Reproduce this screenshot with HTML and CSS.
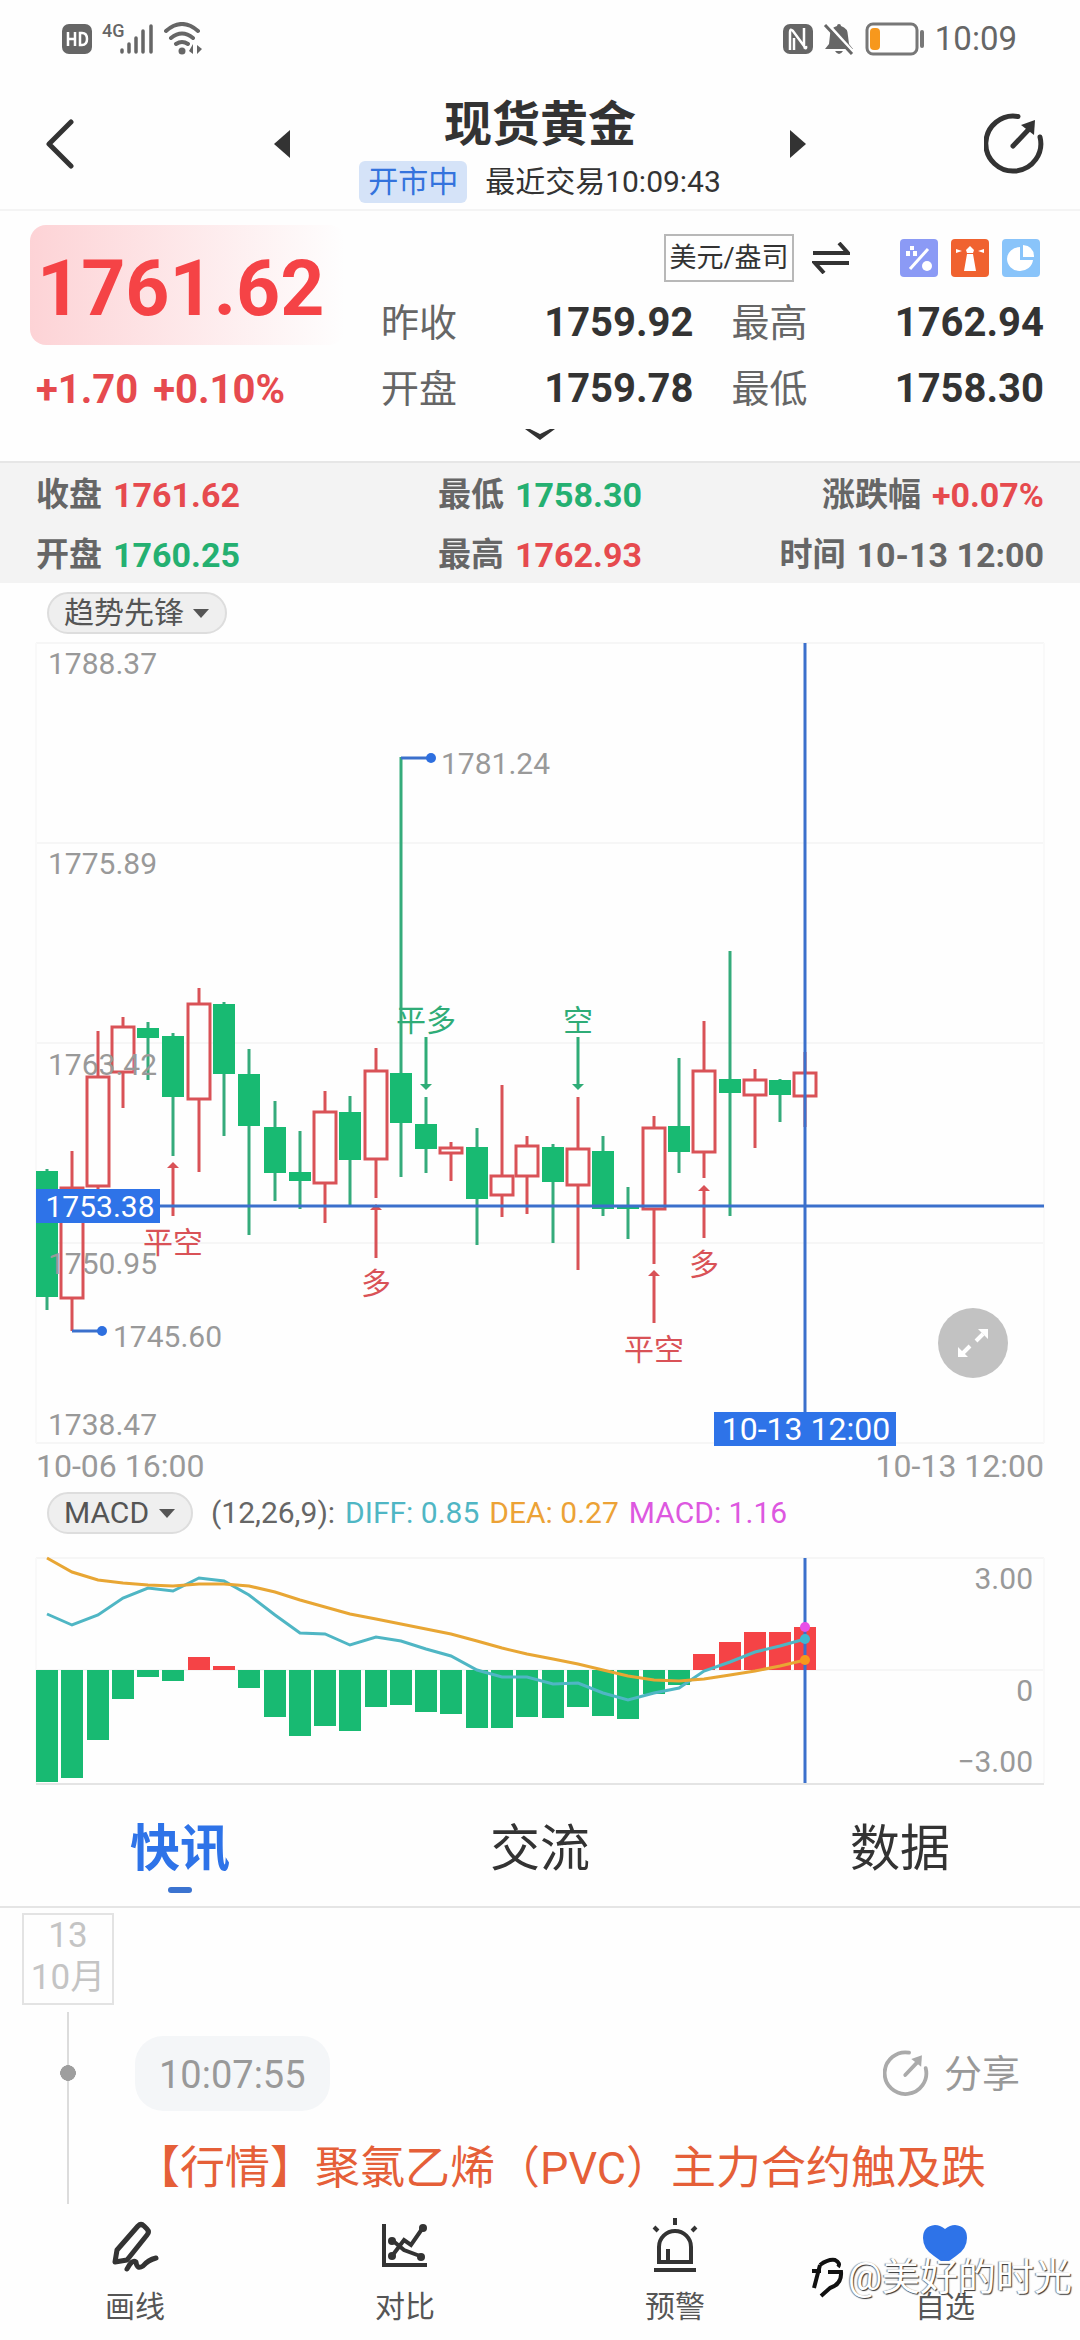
FILE: index.html
```html
<!DOCTYPE html>
<html lang="zh-CN">
<head>
<meta charset="utf-8">
<meta name="viewport" content="width=device-width, initial-scale=1">
<title>现货黄金</title>
<link rel="stylesheet" href="styles.css">
</head>
<body>
<svg class="defs" width="0" height="0" aria-hidden="true">
  <symbol id="share" viewBox="0 0 60 62">
    <path d="M34 3.500A27.500 27.500 0 1 0 56 24" fill="none" stroke="currentColor" stroke-width="5" stroke-linecap="round"/>
    <path d="M29 33 47 14" fill="none" stroke="currentColor" stroke-width="5" stroke-linecap="round"/>
    <path d="M37 12 51 7 50 22z" fill="currentColor"/>
  </symbol>
</svg>

<div class="status">
  <div class="status-side">
    <svg width="30" height="32" viewBox="0 0 30 32"><rect y="1" width="30" height="30" rx="7" fill="#666"/><path d="M6 9v14M13 9v14M6 16h7M18 10v12h2q5 0 5-6t-5-6z" fill="none" stroke="#fff" stroke-width="2.500"/></svg>
    <span class="net">4G</span>
    <svg class="bars" width="34" height="32" viewBox="0 0 34 32" stroke="#666" stroke-width="3.500" stroke-linecap="round"><path d="M2 27v2M9 21v8M16 15v14M23 8v21M31 3v26"/></svg>
    <svg width="38" height="34" viewBox="0 0 38 34" fill="none" stroke="#666" stroke-width="4" stroke-linecap="round"><path d="M2 9Q18-5 34 9M7 16Q18 7 29 16M12 22Q18 18 24 22"/><circle cx="18" cy="29" r="3.500" fill="#666" stroke="none"/><path d="M25 29l4-7v10zM38 27l-5-4v9z" fill="#666" stroke="none"/></svg>
  </div>
  <div class="status-side">
    <svg width="30" height="32" viewBox="0 0 30 32"><rect y="1" width="30" height="30" rx="7" fill="#666"/><path d="M7 27V9q0-4 3-1l11 15V5M11 27V15M23 23q1 4-2 1" fill="none" stroke="#fff" stroke-width="2.500"/></svg>
    <svg width="32" height="32" viewBox="0 0 32 32"><path d="M16 1q2 0 2 2 7 2 7 10l1 8 4 5H2l4-5 1-9q0-7 7-9 0-2 2-2z" fill="#666"/><path d="M12 28h8q-4 6-8 0z" fill="#666"/><path d="M3-1 31 30" stroke="#fff" stroke-width="3"/><path d="M2 2 29 31" stroke="#666" stroke-width="3"/></svg>
    <svg width="60" height="34" viewBox="0 0 60 34"><rect x="2" y="2" width="50" height="30" rx="6" fill="none" stroke="#777" stroke-width="3"/><rect x="5" y="6" width="10" height="22" rx="4" fill="#f7981d"/><path d="M57 10v14" stroke="#777" stroke-width="4" stroke-linecap="round"/></svg>
    <time class="clock">10:09</time>
  </div>
</div>

<header class="head">
  <button class="icon-btn" aria-label="返回"><svg width="30" height="50" viewBox="0 0 30 50"><path d="M26 3 4 25l22 22" fill="none" stroke="#333" stroke-width="5" stroke-linecap="round" stroke-linejoin="round"/></svg></button>
  <div class="stepper">
    <button class="icon-btn" aria-label="上一个"><svg width="16" height="28" viewBox="0 0 16 28"><path d="M16 0v28L0 14z" fill="#333"/></svg></button>
    <div class="head-mid">
      <h1>现货黄金</h1>
      <p class="trade"><span class="open">开市中</span>最近交易10:09:43</p>
    </div>
    <button class="icon-btn" aria-label="下一个"><svg width="16" height="28" viewBox="0 0 16 28"><path d="M0 0v28l16-14z" fill="#333"/></svg></button>
  </div>
  <button class="icon-btn" aria-label="分享"><svg width="60" height="62"><use href="#share"/></svg></button>
</header>

<section class="quote">
  <div class="now">
    <div class="price">1761.62</div>
    <div class="change"><span>+1.70</span><span>+0.10%</span></div>
  </div>
  <div class="detail">
    <div class="tools">
      <button class="unit">美元/盎司</button>
      <button class="icon-btn" aria-label="切换单位"><svg width="38" height="32" viewBox="0 0 38 32" fill="none" stroke="#333" stroke-width="4"><path d="M1 11h35L27 1M37 21H3l9 10"/></svg></button>
      <span class="apps">
        <button class="icon-btn" aria-label="计算"><svg width="38" height="38" viewBox="0 0 38 38"><rect width="38" height="38" rx="4" fill="#8b9af5"/><path d="M28 10 10 30" stroke="#fff" stroke-width="3"/><path d="M10 7h4v4h-4zM6 12h4v5H6zM13 12h4v5h-4z" fill="#fff"/><circle cx="27" cy="27" r="5" fill="#fff"/></svg></button>
        <button class="icon-btn" aria-label="灯塔"><svg width="38" height="38" viewBox="0 0 38 38"><rect width="38" height="38" rx="4" fill="#f0622f"/><path d="M16 15h6l3 17H13zM15 11l4-4 4 4-1 3h-6zM5 10l6 2-6 2zM33 10l-6 2 6 2z" fill="#fff"/></svg></button>
        <button class="icon-btn" aria-label="统计"><svg width="38" height="38" viewBox="0 0 38 38"><rect width="38" height="38" rx="4" fill="#89c4fa"/><path d="M18 8v13h13A13 12 0 1 1 18 8z" fill="#fff"/><path d="M21 6q11 1 11 12H21z" fill="#fff"/></svg></button>
      </span>
    </div>
    <dl class="stats">
      <div><dt>昨收</dt><dd>1759.92</dd></div>
      <div><dt>最高</dt><dd>1762.94</dd></div>
      <div><dt>开盘</dt><dd>1759.78</dd></div>
      <div><dt>最低</dt><dd>1758.30</dd></div>
    </dl>
  </div>
  <button class="more" aria-label="展开"><svg width="30" height="12" viewBox="0 0 30 12"><path d="M0 1h5l10 5 10-5h5L15 12z" fill="#333"/></svg></button>
</section>

<dl class="summary">
  <div><dt>收盘</dt><dd class="up">1761.62</dd></div>
  <div><dt>最低</dt><dd class="down">1758.30</dd></div>
  <div><dt>涨跌幅</dt><dd class="up">+0.07%</dd></div>
  <div><dt>开盘</dt><dd class="down">1760.25</dd></div>
  <div><dt>最高</dt><dd class="up">1762.93</dd></div>
  <div><dt>时间</dt><dd>10-13 12:00</dd></div>
</dl>

<div class="bar">
  <label class="pick"><select aria-label="主图指标"><option>趋势先锋</option></select><svg width="16" height="9" viewBox="0 0 16 9"><path d="M0 0h16L8 9z" fill="#555"/></svg></label>
</div>
<div class="chart">
  <svg id="kline" viewBox="0 634 1080 850" role="img" aria-label="K线图"></svg>
  <button class="expand" aria-label="全屏"><svg width="34" height="34" viewBox="0 0 34 34"><path d="M20 15l7-7M14 20l-7 7" stroke="#fff" stroke-width="4"/><path d="M22 3h10v10zM2 21v10h10z" fill="#fff"/></svg></button>
</div>

<div class="bar macd-bar">
  <label class="pick"><select aria-label="副图指标"><option>MACD</option></select><svg width="16" height="9" viewBox="0 0 16 9"><path d="M0 0h16L8 9z" fill="#555"/></svg></label>
  <p class="legend"><span>(12,26,9):</span><span class="diff">DIFF: 0.85</span><span class="dea">DEA: 0.27</span><span class="macd">MACD: 1.16</span></p>
</div>
<div class="chart">
  <svg id="macd" viewBox="0 1534 1080 252" role="img" aria-label="MACD"></svg>
</div>

<nav class="tabs">
  <a href="#news" class="on">快讯</a>
  <a href="#talk">交流</a>
  <a href="#data">数据</a>
</nav>

<main class="news" id="news">
  <div class="rail">
    <div class="day"><span>13</span><span>10月</span></div>
    <div class="line"></div>
  </div>
  <article class="item">
    <div class="meta">
      <time class="time">10:07:55</time>
      <button class="share"><svg width="46" height="47"><use href="#share"/></svg>分享</button>
    </div>
    <h2>【行情】聚氯乙烯（PVC）主力合约触及跌</h2>
  </article>
</main>

<nav class="dock">
  <button><svg width="56" height="56" viewBox="0 0 56 56" fill="none" stroke="#333" stroke-width="5" stroke-linejoin="round" stroke-linecap="round"><path d="M8 44l2-12L31 8q3-3 6 0l3 3q3 3 0 6L20 42zM20 51q5-10 9-7 1 8 7 4 5-6 13-8"/></svg>画线</button>
  <button><svg width="56" height="56" viewBox="0 0 56 56" fill="none" stroke="#333" stroke-width="4"><path d="M7 6v41h43"/><path d="M15 38 27 22 34 27 45 11M15 22l12 10 16 6"/><g fill="#333" stroke="none"><circle cx="46" cy="10" r="4"/><circle cx="15" cy="23" r="4"/><circle cx="15" cy="38" r="4"/><circle cx="44" cy="39" r="4"/></g></svg>对比</button>
  <button><svg width="56" height="56" viewBox="0 0 56 56" fill="none" stroke="#333" stroke-width="4"><path d="M12 44V29a16 16 0 0 1 32 0v15zM21 43V31M7 52h42M28 0v7M7 9l4 4M49 9l-4 4"/></svg>预警</button>
  <button><svg width="56" height="56" viewBox="0 0 56 56"><path d="M28 11Q33 7 38 7q12 1 12 13 0 11-11 18L28 46 17 38Q6 31 6 20 6 8 18 7q5 0 10 4z" fill="#2e73e8"/></svg>自选</button>
  <div class="mark"><svg width="34" height="42" viewBox="0 0 34 42" fill="none" stroke="#111" stroke-width="4"><path d="M2 15h9M10 9 4 32M10 9q8-6 15-5 6 3 3 7M18 16h13q1 12-11 16L11 40"/></svg>@美好的时光</div>
</nav>
<script src="chart.js"></script>
</body>
</html>
```

FILE: styles.css
```css
* { box-sizing: border-box; }
body, h1, h2, p, dl, dd { margin: 0; }
body {
  display: flex;
  flex-direction: column;
  min-height: 100vh;
  background: #fefefe;
  color: #333;
  font-family: Roboto, "Noto Sans CJK SC", sans-serif;
  font-size: 30px;
}
button, select { font: inherit; color: inherit; background: none; border: 0; padding: 0; }
svg { display: block; flex: none; }
.defs { position: absolute; }
a { color: inherit; text-decoration: none; }

.status {
  display: flex;
  justify-content: space-between;
  height: 78px;
  padding: 0 63px 0 62px;
  align-items: center;
  color: #666;
}
.status-side { display: flex; align-items: center; gap: 10px; }
.net { align-self: flex-start; width: 18px; font-size: 18px; line-height: 18px; font-weight: 500; margin-right: -10px; }
.clock { font-size: 33px; line-height: 40px; }

.head {
  display: grid;
  grid-template-columns: 1fr 532px 1fr;
  align-items: center;
  height: 133px;
  padding: 0 36px 0 36px;
  border-bottom: 2px solid #f4f4f4;
}
.head > .icon-btn:first-child { padding-left: 9px; }
.head > .icon-btn:last-child { justify-self: end; }
.stepper { display: flex; justify-content: space-between; align-items: center; }
.head-mid { display: flex; flex-direction: column; align-items: center; }
.head h1 { padding-top: 4px; font-size: 48px; line-height: 72px; font-weight: 700; }
.trade { display: flex; align-items: center; gap: 18px; line-height: 42px; }
.open { background: #d5e3f8; color: #3473dd; border-radius: 6px; padding: 0 9px; }

.quote {
  display: grid;
  grid-template-columns: 309px 1fr;
  column-gap: 36px;
  padding: 14px 36px 15px;
}
.price {
  height: 120px;
  margin-left: -6px;
  padding-left: 7px;
  border-radius: 16px;
  background: linear-gradient(90deg, #fdd3d6, #fefefe);
  color: #f54346;
  font-size: 77px;
  line-height: 128px;
  font-weight: 700;
}
.change { display: flex; gap: 15px; margin-top: 11px; color: #e64a4e; font-size: 40px; line-height: 68px; height: 66px; font-weight: 700; }
.tools { display: flex; justify-content: flex-end; align-items: center; height: 65px; gap: 18px; padding-right: 4px; }
.unit { height: 48px; width: 130px; border: 2px solid #b8b8b8; font-size: 27px; line-height: 42px; white-space: nowrap; }
.apps { display: flex; gap: 13px; margin-left: 32px; }
.stats { display: grid; grid-template-columns: 1fr 1fr; column-gap: 38px; line-height: 66px; }
.stats div { display: flex; justify-content: space-between; }
.stats dt { font-size: 38px; color: #666; }
.stats dd { font-size: 40px; font-weight: 700; }
.more { grid-column: 1 / -1; display: flex; justify-content: center; align-items: center; height: 24px; }

.summary {
  display: grid;
  grid-template-columns: 1fr 1fr 1fr;
  padding: 2px 36px;
  border-top: 2px solid #e6e6e6;
  background: #f3f3f3;
  color: #666;
  font-size: 34px;
  line-height: 60px;
  font-weight: 700;
  height: 122px;
}
.summary div { display: flex; gap: 11px; white-space: nowrap; }
.summary dt { font-size: 33px; }
.summary div:nth-child(3n + 2) { justify-content: center; }
.summary div:nth-child(3n) { justify-content: flex-end; }
.up { color: #e64a4e; }
.down { color: #24b071; }

.bar { display: flex; align-items: center; gap: 18px; padding: 9px 36px 0 47px; }
.macd-bar { padding-top: 8px; }
.pick {
  display: flex;
  align-items: center;
  gap: 9px;
  height: 42px;
  padding: 0 16px 0 15px;
  border: 2px solid #ddd;
  border-radius: 21px;
  background: #efefef;
  color: #555;
}
.pick select { appearance: none; line-height: 38px; }
.legend { display: flex; gap: 10px; line-height: 42px; color: #666; white-space: nowrap; }
.diff { color: #4fb6c4; }
.dea { color: #eca236; }
.macd { color: #dd58e0; }

.chart { position: relative; }
.chart > svg { width: 100%; height: auto; }
.chart text { font-size: 30px; fill: #999; }
.chart .date { font-size: 32px; }
.chart .white { fill: #fff; }
.chart .sig-up { fill: #d95257; }
.chart .sig-down { fill: #2fac77; }
.expand {
  position: absolute;
  right: 72px;
  bottom: 106px;
  display: flex;
  align-items: center;
  justify-content: center;
  width: 70px;
  height: 70px;
  border-radius: 50%;
  background: #c2c2c2;
}

.tabs { display: flex; height: 122px; border-bottom: 2px solid #e5e5e5; font-size: 50px; }
.tabs a { position: relative; flex: 1; text-align: center; line-height: 126px; height: 120px; }
.tabs .on { color: #2e73e8; font-weight: 700; }
.tabs .on::after {
  content: "";
  position: absolute;
  left: 50%;
  bottom: 13px;
  width: 24px;
  height: 6px;
  margin-left: -12px;
  border-radius: 3px;
  background: #3b73d0;
}

.news { display: flex; flex: 1; gap: 21px; padding: 5px 60px 0 22px; }
.rail { display: flex; flex-direction: column; align-items: center; gap: 7px; width: 92px; }
.day {
  display: flex;
  flex-direction: column;
  align-items: center;
  width: 92px;
  height: 92px;
  border: 2px solid #e3e3e3;
  color: #c4c4c4;
  font-size: 35px;
  line-height: 42px;
}
.line {
  flex: 1;
  width: 16px;
  background:
    radial-gradient(circle 8px at 8px 61px, #9e9e9e 95%, transparent),
    linear-gradient(#dcdcdc, #dcdcdc) 7px 0 / 2px 100% no-repeat;
}
.item { flex: 1; padding-top: 123px; }
.meta { display: flex; justify-content: space-between; align-items: center; height: 75px; color: #999; }
.time { height: 75px; padding: 0 24px; border-radius: 28px; background: #f4f6f8; font-size: 38px; line-height: 79px; }
.share { display: flex; align-items: center; gap: 15px; font-size: 38px; line-height: 56px; }
.share svg { color: #aaa; }
.item h2 { margin-top: 26px; color: #e55f38; font-size: 45px; line-height: 64px; font-weight: 400; white-space: nowrap; }

.dock {
  position: sticky;
  bottom: 0;
  display: flex;
  height: 136px;
  background: #fefefe;
  border-radius: 12px 12px 0 0;
  color: #555;
}
.dock button { flex: 1; display: flex; flex-direction: column; align-items: center; padding-top: 14px; gap: 11px; line-height: 44px; }
.mark {
  position: absolute;
  right: 8px;
  bottom: 36px;
  display: flex;
  align-items: center;
  gap: 4px;
  color: #fff;
  font-size: 38px;
  line-height: 54px;
  text-shadow: 1px 1px 1px #333, -1px 0 1px #888;
}
```

FILE: chart.js
```js
const X0 = 47, STEP = 25.28, LEFT = 36, RIGHT = 1044;
const GREEN = '#18ba72', RED = '#d95257', BLUE = '#3b70cc';
const x = i => Math.round(X0 + STEP * i);
const line = (x1, y1, x2, y2, c, w = 2) =>
  `<line x1="${x1}" y1="${y1}" x2="${x2}" y2="${y2}" stroke="${c}" stroke-width="${w}"/>`;
const rect = (l, t, w, h, c) => `<rect x="${l}" y="${t}" width="${w}" height="${h}" fill="${c}"/>`;
const dot = (cx, cy, c) => `<circle cx="${cx}" cy="${cy}" r="5" fill="${c}"/>`;
const text = (tx, ty, s, cls = '', anchor = 'start') =>
  `<text x="${tx}" y="${ty}" class="${cls}" text-anchor="${anchor}">${s}</text>`;

// direction (1 up, 0 down), high, body top, body bottom, low
const candles = [
  [0,1169,1171,1297,1310],[1,1151,1188,1298,1331],[1,1031,1077,1186,1190],[1,1017,1027,1072,1108],
  [0,1022,1028,1038,1080],[0,1033,1036,1097,1156],[1,988,1004,1099,1172],[0,1002,1004,1074,1136],
  [0,1049,1074,1126,1235],[0,1101,1127,1173,1201],[0,1131,1172,1181,1209],[1,1091,1112,1183,1223],
  [0,1096,1112,1160,1206],[1,1048,1071,1159,1198],[0,757,1073,1123,1177],[0,1097,1124,1149,1173],
  [1,1142,1148,1153,1181],[0,1128,1147,1199,1245],[1,1085,1176,1195,1217],[1,1136,1146,1176,1214],
  [0,1144,1147,1182,1243],[1,1097,1149,1185,1270],[0,1136,1151,1209,1216],[0,1187,1207,1209,1239],
  [1,1116,1128,1209,1264],[0,1058,1126,1152,1173],[1,1021,1071,1152,1178],[0,951,1079,1093,1216],
  [1,1069,1080,1095,1148],[0,1079,1080,1095,1122],[1,1052,1073,1096,1127]
];

let k = '';
[643, 843, 1043, 1243, 1443].forEach(y => { k += line(LEFT, y, RIGHT, y, '#f6f6f6'); });
[LEFT, RIGHT].forEach(v => { k += line(v, 643, v, 1443, '#f9f9f9'); });
candles.forEach(([up, hi, top, bot, lo], i) => {
  const c = x(i);
  if (up) {
    k += line(c, hi, c, top, RED, 3) + line(c, bot, c, lo, RED, 3);
    k += `<rect x="${c - 11}" y="${top}" width="22" height="${bot - top}" fill="none" stroke="${RED}" stroke-width="3"/>`;
  } else {
    k += line(c, hi, c, lo, '#35ab7b', 3) + rect(c - 11, top, 22, bot - top, GREEN);
  }
});

// trade signals: candle, tip, tail, text baseline, label, rising
[[5,1162,1216,1253,'平空',1],[13,1204,1258,1294,'多',1],[24,1270,1323,1360,'平空',1],
 [26,1185,1238,1275,'多',1],[15,1090,1037,1031,'平多',0],[21,1090,1037,1031,'空',0]]
  .forEach(([i, tip, tail, base, label, up]) => {
    const c = x(i), col = up ? RED : '#2fac77', d = up ? 6 : -6;
    k += line(c, tip + d / 2, c, tail, col, 3);
    k += `<path d="M${c} ${tip}l-6 ${d}h12z" fill="${col}"/>`;
    k += text(c, base, label, up ? 'sig-up' : 'sig-down', 'middle');
  });

k += line(x(14), 758, 430, 758, BLUE, 3) + dot(431, 758, '#2e6fdf') + text(441, 774, '1781.24');
k += line(x(1), 1331, 102, 1331, BLUE, 3) + dot(102, 1331, '#2e6fdf') + text(113, 1347, '1745.60');
[['1788.37',674],['1775.89',874],['1763.42',1075],['1750.95',1274],['1738.47',1435]]
  .forEach(([s, y]) => { k += text(48, y, s); });
k += text(36, 1477, '10-06 16:00', 'date') + text(RIGHT, 1477, '10-13 12:00', 'date', 'end');
k += line(LEFT, 1206, RIGHT, 1206, BLUE, 3) + line(x(30), 643, x(30), 1412, BLUE, 3);
k += rect(36, 1189, 124, 34, '#2e73e8') + text(100, 1217, '1753.38', 'white', 'middle');
k += rect(714, 1412, 182, 34, '#2e73e8') + text(806, 1440, '10-13 12:00', 'white date', 'middle');
document.getElementById('kline').innerHTML = k;

const ZERO = 1670;
const bars = [1782,1778,1740,1699,1677,1681,1657,1666,1688,1717,1736,1726,1731,1707,1705,1712,
  1714,1728,1728,1717,1718,1707,1716,1719,1694,1685,1654,1642,1632,1632,1627];
const dea = [1558,1572,1580,1583,1585,1586,1584,1584,1586,1592,1600,1607,1614,1619,1624,1629,
  1634,1641,1648,1654,1659,1664,1670,1676,1680,1681,1679,1675,1671,1666,1660];
const diff = [1614,1625,1615,1598,1588,1591,1578,1581,1595,1615,1633,1634,1645,1637,1641,1649,
  1656,1670,1677,1677,1684,1683,1693,1700,1693,1688,1671,1662,1652,1646,1639];
const curve = (ys, c) =>
  `<polyline points="${ys.map((y, i) => x(i) + ',' + y).join(' ')}" fill="none" stroke="${c}" stroke-width="3"/>`;

let m = line(LEFT, 1558, RIGHT, 1558, '#f6f6f6') + line(LEFT, ZERO, RIGHT, ZERO, '#f6f6f6');
[LEFT, RIGHT].forEach(v => { m += line(v, 1558, v, 1783, '#f9f9f9'); });
m += line(LEFT, 1784, RIGHT, 1784, '#e4e4e4');
bars.forEach((y, i) => {
  m += y > ZERO ? rect(x(i) - 11, ZERO, 22, y - ZERO, GREEN) : rect(x(i) - 11, y, 22, ZERO - y, '#f54346');
});
m += curve(diff, '#4fb6c4') + curve(dea, '#e8a634') + line(x(30), 1558, x(30), 1783, BLUE, 3);
m += dot(x(30), 1627, '#e84fe8') + dot(x(30), 1639, '#3fb8cf') + dot(x(30), 1660, '#f7981d');
m += text(1033, 1589, '3.00', '', 'end') + text(1033, 1701, '0', '', 'end') + text(1033, 1772, '−3.00', '', 'end');
document.getElementById('macd').innerHTML = m;
```
